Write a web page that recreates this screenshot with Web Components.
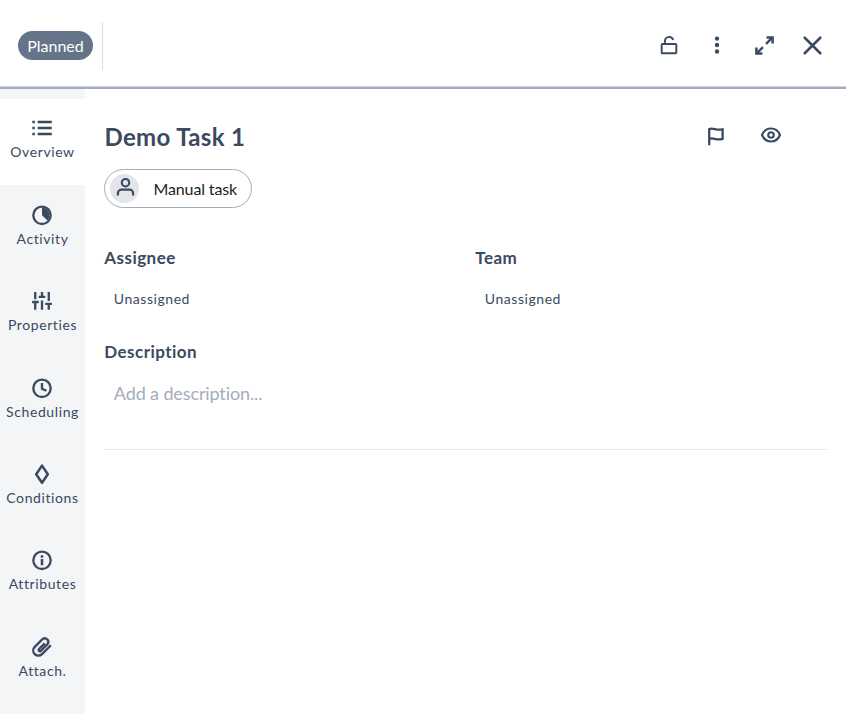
<!DOCTYPE html>
<html lang="en">
<head>
<meta charset="utf-8">
<title>Demo Task 1</title>
<style>
html,body{margin:0;height:100%;background:#fff;overflow:hidden}
body{font-family:Lato,"Open Sans",sans-serif;color:#3b4961;font-variant-ligatures:none}
</style>
</head>
<body>
<task-panel></task-panel>
<script>
const S = (w, d) => `<g fill="none" stroke="currentColor" stroke-width="${w}">${d}</g>`;
const ICONS = {
  unlock: S(2.1, '<rect x="4" y="11" width="16" height="10" rx="1"/><path d="M7.500 11V8a4.600 4.600 0 0 1 9-1.400"/>'),
  more: '<circle cx="12" cy="3.4" r="2.9"/><circle cx="12" cy="12" r="2.9"/><circle cx="12" cy="20.6" r="2.9"/>',
  expand: S(2.3, '<path d="M13.500 10.500l6-6M10.500 13.500l-6 6"/>') + S(2.4, '<path d="M14 4.400h5.800V10M10 19.600H4.200V14"/>'),
  close: S(2.8, '<path d="M3.6 3.6l16.8 16.8M20.4 3.6L3.6 20.4" stroke-linecap="round"/>'),
  list: '<path d="M7.500 4.600h14.600v2.600H7.500zM7.500 10.700h14.600v2.600H7.500zM7.500 16.800h14.600v2.600H7.500zM2 4.600h2.600v2.600H2zM2 10.700h2.600v2.600H2zM2 16.800h2.600v2.600H2z"/>',
  activity: S(2.4, '<circle cx="12" cy="12.3" r="9"/>') + '<path d="M12 4.600a7.700 7.700 0 0 1 5.600 13L12 12.300z"/>',
  sliders: S(2.4, '<path d="M5 13v8M1.800 13h6.800M5 2.800v7.300M12 11.500v9.500M8.600 7.800h6.800M12 2.800v5M19 15v6M15.400 15h6.800M19 2.800v9.300"/>'),
  clock: S(2.4, '<circle cx="12" cy="12.3" r="9"/><path d="M12 6.800V12.800l4.600 2"/>'),
  diamond: S(2.6, '<path d="M12 3.300l6 8.900L12 21.100l-6-8.900z" stroke-linejoin="round"/>'),
  info: S(2.4, '<circle cx="12" cy="12.3" r="9"/>') + '<path d="M10.700 7.200h2.600v2.400h-2.600zM10.700 11h2.600v6.300h-2.600z"/>',
  clip: S(2.4, '<path d="M14.800 8.200l-5.900 5.900a1.300 1.300 0 0 0 1.900 1.900l6.900-6.900a3.700 3.700 0 0 0-5.200-5.200l-8 8a5.300 5.300 0 0 0 7.500 7.500l9.200-9.200"/>'),
  user: S(2.5, '<circle cx="12" cy="6.500" r="4.200"/><path d="M3.300 21v-2.500a4 4 0 0 1 4-4h9.400a4 4 0 0 1 4 4v2.500"/>'),
  flag: S(2.5, '<path d="M4.600 22V4.600c4-2.200 8 2.200 14.600 0v10.600c-6.600 2.200-10.600-2.200-14.600 0"/>'),
  eye: S(2.3, '<path d="M2.200 12C6 2.600 18 2.600 21.800 12C18 21.400 6 21.400 2.200 12z"/><circle cx="12" cy="12" r="3"/>')
};

function define(name, html) {
  customElements.define(name, class extends HTMLElement {
    constructor() {
      super();
      this.attachShadow({mode: 'open'});
    }
    connectedCallback() {
      this.shadowRoot.innerHTML = typeof html === 'function' ? html(this) : html;
    }
  });
}

define('ui-icon', el => `<style>:host{display:block;flex:none}svg{display:block}</style>
<svg width="${el.getAttribute('size')}" height="${el.getAttribute('size')}" viewBox="${el.hasAttribute('inset') ? '-.4 -.4 24.8 24.8' : '0 0 24 24'}" fill="currentColor">${ICONS[el.getAttribute('name')]}</svg>`);

define('status-badge', `<style>:host{display:flex;align-items:center;justify-content:center;box-sizing:border-box;width:75px;height:29px;border-radius:15px;background:#667489;color:#fff;font-size:16px;line-height:20px;padding-top:1px;margin-top:-2px}</style><slot></slot>`);

define('panel-header', `<style>
:host{display:flex;align-items:center;box-sizing:border-box;height:89px;flex:none;border-bottom:2px solid #a2adb9;box-shadow:inset 0 -1px #d2d8de;padding:5px 22px 0 18px}
.rule{width:1px;height:48px;background:#dcdde0;margin-left:9px}
.tools{display:flex;align-items:center;margin:-2px 0 0 auto;gap:26px}
</style><slot name="status"></slot><span class="rule"></span><div class="tools"><slot></slot></div>`);

define('nav-item', el => `<style>
:host{display:flex;flex-direction:column;align-items:center;box-sizing:border-box;height:86.400px;padding-top:17.350px;gap:2px;flex:none;font-size:14px;line-height:20px;letter-spacing:.6px;white-space:nowrap}
:host([active]){background:#fff}
ui-icon{margin-right:1px}
</style><ui-icon name="${el.getAttribute('icon')}" size="24" inset></ui-icon><span><slot></slot></span>`);

define('side-nav', `<style>:host{display:flex;flex-direction:column;width:85px;flex:none;box-sizing:border-box;padding-top:10px;background:#f3f5f7}</style><slot></slot>`);

define('task-chip', `<style>
:host{display:flex;align-items:center;box-sizing:border-box;width:148px;height:39px;border:1px solid #a3adb9;border-radius:20px;padding-left:5px;color:#1b1d21;font-size:16px;line-height:22px;letter-spacing:-.13px}
.avatar{display:grid;place-items:center;width:29px;height:29px;border-radius:50%;background:#e3e5ea;color:#3b4961;margin-right:14.500px}
.avatar ui-icon{margin:-2px 0 0 1px}
</style><span class="avatar"><ui-icon name="user" size="21"></ui-icon></span><span><slot></slot></span>`);

define('form-field', el => `<style>
:host{display:block}
h2{font-size:17px;line-height:22px;font-weight:700;letter-spacing:.45px;margin:0 0 0 .3px}
.value{margin:20px 0 0 9.800px;font-size:14px;line-height:20px;letter-spacing:.55px}
:host([placeholder]) .value{font-size:18px;line-height:24px;letter-spacing:-.12px;color:#a3adb9;margin-top:18px}
</style><h2>${el.getAttribute('label')}</h2><div class="value"><slot></slot></div>`);

define('task-details', `<style>
:host{display:block;flex:1;padding:32px 19px 0}
.title{display:flex;align-items:center;height:32px}
h1{font-size:24px;line-height:32px;font-weight:700;margin:0 0 0 .5px;letter-spacing:.35px;flex:1}
.actions{display:flex;gap:33.500px;margin:-3px 45px 0 0}
.actions [name=flag]{margin-top:1px}
task-chip{margin-top:16px}
.people{display:grid;grid-template-columns:371px 1fr;margin-top:39px}
.desc{margin-top:32px;height:108px;border-bottom:1px solid #e7e8ea}
</style>
<div class="title"><h1>Demo Task 1</h1><div class="actions"><ui-icon name="flag" size="22"></ui-icon><ui-icon name="eye" size="22"></ui-icon></div></div>
<task-chip>Manual task</task-chip>
<div class="people"><form-field label="Assignee">Unassigned</form-field><form-field label="Team">Unassigned</form-field></div>
<div class="desc"><form-field label="Description" placeholder>Add a description...</form-field></div>`);

define('task-panel', `<style>
:host{display:flex;flex-direction:column;height:714px;background:#fff}
main{display:flex;flex:1;min-height:0}
[name=unlock]{margin-right:2px}
[name=expand]{margin-right:-2px}
</style>
<panel-header><status-badge slot="status">Planned</status-badge>
<ui-icon name="unlock" size="22"></ui-icon><ui-icon name="more" size="18"></ui-icon><ui-icon name="expand" size="25"></ui-icon><ui-icon name="close" size="23" inset></ui-icon></panel-header>
<main><side-nav>
<nav-item icon="list" active>Overview</nav-item><nav-item icon="activity">Activity</nav-item><nav-item icon="sliders">Properties</nav-item><nav-item icon="clock">Scheduling</nav-item><nav-item icon="diamond">Conditions</nav-item><nav-item icon="info">Attributes</nav-item><nav-item icon="clip">Attach.</nav-item>
</side-nav><task-details></task-details></main>`);
</script>
</body>
</html>
